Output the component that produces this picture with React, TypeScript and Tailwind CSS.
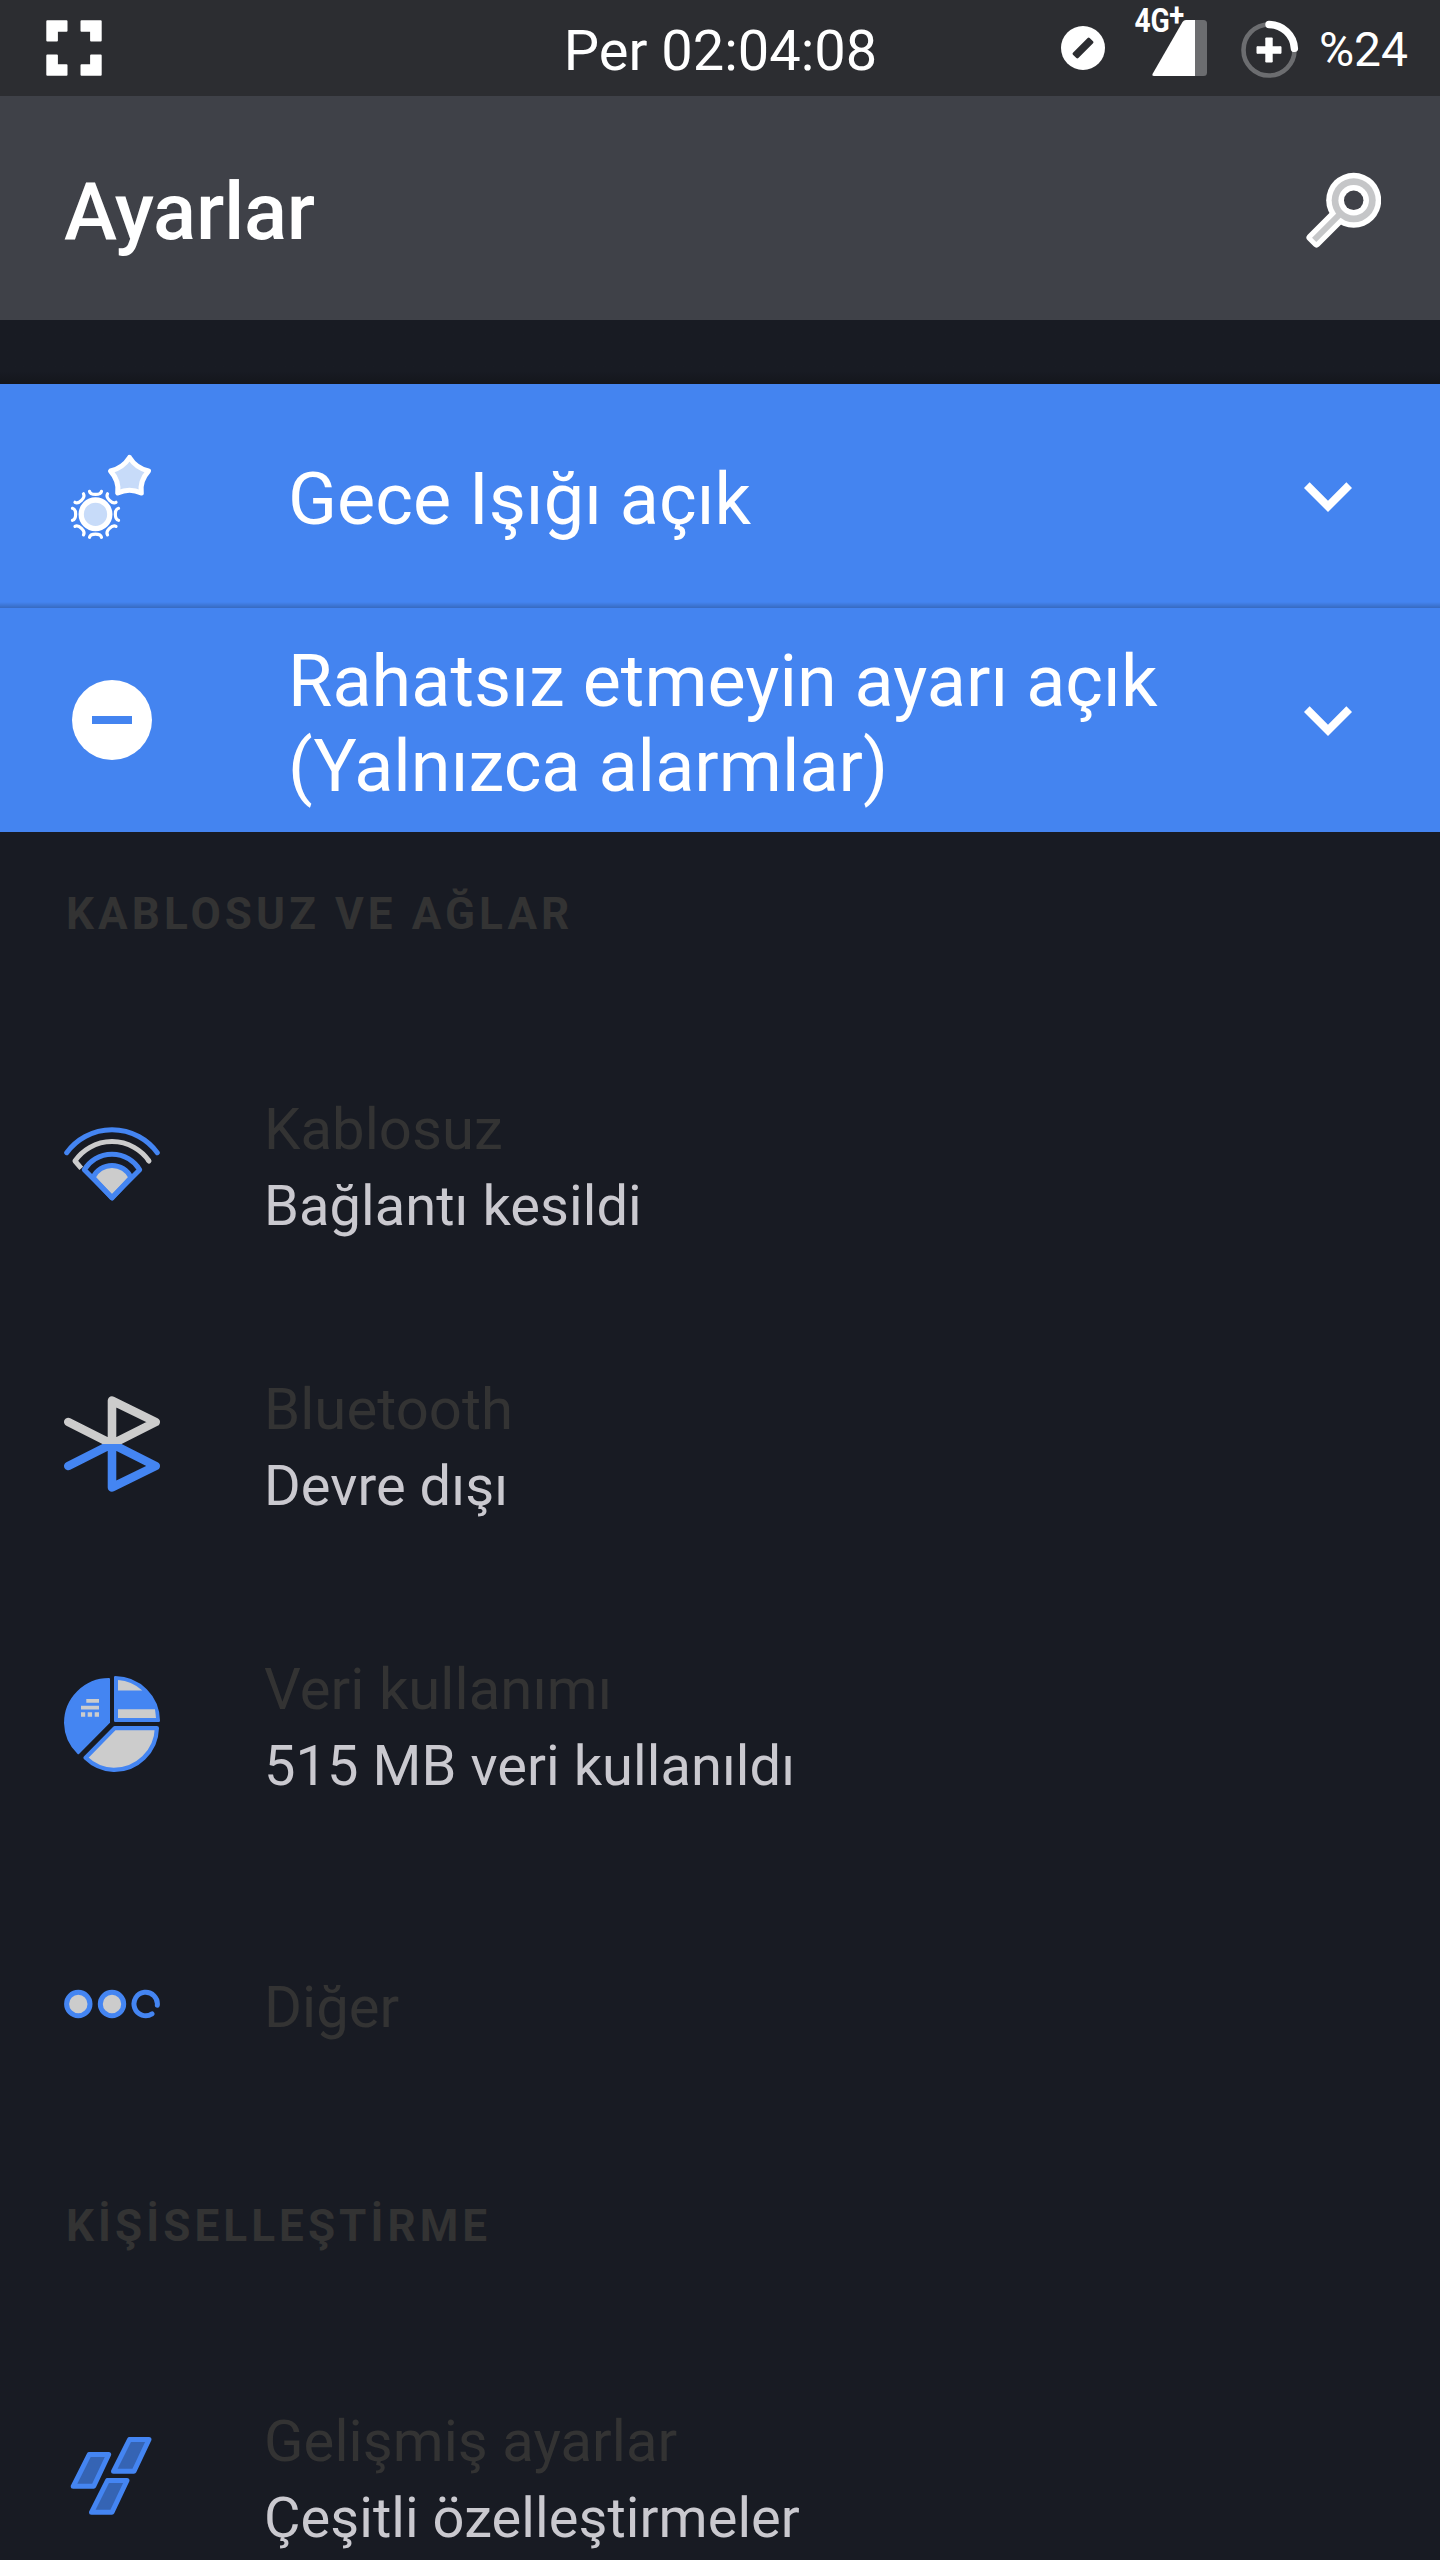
import type { ReactNode } from "react";

const ACCENT = "#4485f2";
const MUTED = "#cccccc";

function FullscreenIcon() {
  return (
    <svg width="56" height="56" viewBox="0 0 56 56" fill="white" stroke="white" strokeWidth="2" strokeLinejoin="round">
      <path d="M1.3 1.3H20.5V10.7H10.9V20.5H1.3Z" />
      <path d="M54.7 1.3H35.5V10.7H45.1V20.5H54.7Z" />
      <path d="M1.3 54.7H20.5V45.3H10.9V35.5H1.3Z" />
      <path d="M54.7 54.7H35.5V45.3H45.1V35.5H54.7Z" />
    </svg>
  );
}

function StatusDndIcon() {
  return (
    <svg width="44" height="44" viewBox="0 0 44 44">
      <circle cx="22" cy="22" r="22" fill="white" />
      <rect x="10.2" y="18.2" width="23.6" height="7.6" rx="1.4" fill="#2c2d31" transform="rotate(-45 22 22)" />
    </svg>
  );
}

function SignalIcon() {
  return (
    <svg width="74" height="96" viewBox="0 0 74 96" className="overflow-visible">
      <path d="M61 20H69.500Q73 20 73 23.500V72.500Q73 76 69.500 76H61Z" fill="#6c6d70" />
      <path d="M52 20H61V76H20Q17.500 76 18.800 73.500L48.500 22Q49.700 20 52 20Z" fill="white" />
      <text x="0.500" y="31.500" fill="white" fontFamily="Roboto" fontWeight="700" fontSize="34" transform="scale(0.83 1)">
        4G
        <tspan x="42.500" y="25.500" fontSize="33">
          +
        </tspan>
      </text>
    </svg>
  );
}

function BatteryIcon() {
  return (
    <svg width="60" height="60" viewBox="0 0 60 60" fill="none">
      <circle cx="30" cy="30" r="25.500" stroke="#6c6d70" strokeWidth="4.600" />
      <path d="M30 4.500A25.500 25.500 0 0 1 55.400 28.400" stroke="white" strokeWidth="7.400" strokeLinecap="round" />
      <path d="M18.500 30H41.500M30 18.500V41.500" stroke="white" strokeWidth="7.400" />
      <path d="M18.500 27.300V32.700M41.500 27.300V32.700M27.300 18.500H32.700M27.300 41.500H32.700" stroke="white" strokeWidth="2" strokeLinecap="round" />
    </svg>
  );
}

function SearchIcon() {
  return (
    <svg width="76" height="76" viewBox="0 0 76 76">
      <path d="M5.500 65.500L40 31L46 37L11.500 71.500Z" fill="white" stroke="white" strokeWidth="8" strokeLinejoin="round" />
      <circle cx="48.700" cy="28.300" r="27.500" fill="white" />
      <circle cx="48.700" cy="28.300" r="22" fill="#c5c6c8" />
      <path d="M48.700 28.300L9.200 67.800" stroke="#c5c6c8" strokeWidth="6" />
      <circle cx="48.700" cy="28.300" r="15.300" fill="white" />
      <circle cx="48.700" cy="28.300" r="9.700" fill="#3f4148" />
    </svg>
  );
}

function NightLightIcon() {
  const rays = [0, 45, 90, 135, 180, 225, 270, 315];

  return (
    <svg width="96" height="96" viewBox="0 0 96 96" fill="none" stroke="white" strokeLinecap="round" strokeLinejoin="round">
      <path
        d="M65.500 9.500Q72 20 84.500 23Q75.500 33 77.300 45Q65.500 39.500 53.700 45Q55.500 33 46.500 23Q59 20 65.500 9.500Z"
        fill="#c7dbf9"
        strokeWidth="5"
      />
      <circle cx="31.500" cy="66.300" r="14.300" fill="#c7dbf9" strokeWidth="5.300" />
      {rays.map((angle) => (
        <path key={angle} d="M-6 -23C-5 -18.800 5 -18.800 6 -23" strokeWidth="3.200" transform={`translate(31.5 66.3) rotate(${angle})`} />
      ))}
    </svg>
  );
}

function DndIcon() {
  return (
    <svg width="96" height="96" viewBox="0 0 96 96">
      <circle cx="48" cy="48" r="40" fill="white" />
      <rect x="28" y="44" width="40" height="8" fill="#4484f0" />
    </svg>
  );
}

function ChevronIcon() {
  return (
    <svg width="96" height="96" viewBox="0 0 24 24" fill="white">
      <path d="M16.590 8.590L12 13.170 7.410 8.590 6 10l6 6 6-6z" />
    </svg>
  );
}

function WifiIcon() {
  return (
    <svg width="96" height="96" viewBox="0 0 96 96" fill="none" stroke={ACCENT} strokeWidth="5" strokeLinecap="round" strokeLinejoin="round">
      <path d="M17.300 52.300L11 45A45 45 0 0 1 85 45" stroke={MUTED} strokeLinecap="butt" />
      <path d="M84.800 44.800L85 45" stroke={MUTED} />
      <path d="M2.700 36.700A56.100 56.100 0 0 1 93.300 36.700" />
      <path d="M29 61.500A21 21 0 0 1 67 61.500L48 82Z" fill={MUTED} />
      <path d="M48 81.500L20.300 53.700A32.500 32.500 0 0 1 75.700 53.700Z" />
    </svg>
  );
}

function BluetoothIcon() {
  return (
    <svg width="96" height="96" viewBox="0 0 96 96" fill="none" strokeWidth="8.600" strokeLinecap="round" strokeLinejoin="round">
      <clipPath id="bt-top">
        <rect width="96" height="48" />
      </clipPath>
      <clipPath id="bt-bottom">
        <rect y="48" width="96" height="48" />
      </clipPath>
      <path d="M4.300 26L48 48V4.600L91.700 26L48 48" stroke={MUTED} clipPath="url(#bt-top)" />
      <path d="M4.300 70L48 48V91.400L91.700 70L48 48" stroke={ACCENT} clipPath="url(#bt-bottom)" />
    </svg>
  );
}

function DataUsageIcon() {
  return (
    <svg width="96" height="96" viewBox="0 0 96 96" strokeLinejoin="round">
      <path d="M45 3V46.400L14.300 77.300A43.500 43.500 0 0 1 1 47A44 44 0 0 1 45 3Z" fill={ACCENT} stroke={ACCENT} strokeWidth="2" />
      <path d="M51.200 1.200V44.800H94.800A44 44 0 0 0 51.200 1.200Z" fill={ACCENT} stroke={ACCENT} strokeWidth="2.400" />
      <path d="M50.700 52.100H92.900A43 43 0 0 1 49.500 93.900A43 43 0 0 1 21.600 81.700Z" fill={MUTED} stroke={ACCENT} strokeWidth="4.200" />
      <path d="M54 4Q68 5 78.300 14.500H54Z" fill={MUTED} />
      <path d="M54 33.300H91L92 42H54Z" fill={MUTED} />
      <path d="M22.300 23H35V26.800H22.300ZM17 29.800H35V33.600H17ZM17 36.300H21.200V40.700H17ZM23.700 36.300H28.100V40.700H23.700ZM30.700 36.300H35V40.700H30.700Z" fill={MUTED} />
    </svg>
  );
}

function MoreIcon() {
  return (
    <svg width="96" height="96" viewBox="0 0 96 96" stroke={ACCENT} strokeWidth="5" strokeLinecap="round">
      <circle cx="14.300" cy="48" r="11.700" fill={MUTED} />
      <circle cx="48" cy="48" r="11.700" fill={MUTED} />
      <path d="M93.300 49.300A11.700 11.700 0 1 0 88 57.800" fill="none" />
    </svg>
  );
}

function AdvancedIcon() {
  return (
    <svg width="96" height="96" viewBox="0 0 96 96" fill="#3564b4" stroke={ACCENT} strokeWidth="5" strokeLinejoin="round">
      <path d="M65.500 11.500H85L70 43.300H49.500Z" />
      <path d="M25.200 26.500H44.700L29.700 58.300H9.200Z" />
      <path d="M43.500 52.500H63L48 84.300H27.500Z" />
    </svg>
  );
}

function Banner({ icon, children }: { icon: ReactNode; children: ReactNode }) {
  return (
    <div className="flex h-56 items-center bg-[#4484f0] pr-16 pl-16">
      {icon}
      <p className="ml-32 flex-1 pt-[7px] text-[72px] leading-[85px] tracking-[0.02px] text-white">{children}</p>
      <ChevronIcon />
    </div>
  );
}

function SectionHeader({ children }: { children: ReactNode }) {
  return (
    <h2 className="h-48 pt-[55px] pl-[66px] text-[44px] leading-[54px] font-bold tracking-[4.1px] text-[#333333]">{children}</h2>
  );
}

type Item = { title: string; summary?: string; icon: ReactNode };

function SettingRow({ title, summary, icon }: Item) {
  return (
    <li className="flex h-[280px] items-center pl-16">
      {icon}
      <div className={summary ? "ml-[104px] pt-2 tracking-[0.06px]" : "ml-[104px] pt-1.5"}>
        <p className="text-[58px] leading-[76px] text-[#333333]">{title}</p>
        {summary && <p className="text-[56px] leading-[78px] text-[#cac9cf]">{summary}</p>}
      </div>
    </li>
  );
}

const sections: { title: string; items: Item[] }[] = [
  {
    title: "KABLOSUZ VE AĞLAR",
    items: [
      { title: "Kablosuz", summary: "Bağlantı kesildi", icon: <WifiIcon /> },
      { title: "Bluetooth", summary: "Devre dışı", icon: <BluetoothIcon /> },
      { title: "Veri kullanımı", summary: "515 MB veri kullanıldı", icon: <DataUsageIcon /> },
      { title: "Diğer", icon: <MoreIcon /> },
    ],
  },
  {
    title: "KİŞİSELLEŞTİRME",
    items: [{ title: "Gelişmiş ayarlar", summary: "Çeşitli özelleştirmeler", icon: <AdvancedIcon /> }],
  },
];

export default function App() {
  return (
    <div className="h-[2560px] w-[1440px] overflow-hidden bg-[#181b23] font-['Roboto',sans-serif]">
      <header>
        <div className="grid h-24 grid-cols-[1fr_auto_1fr] items-center bg-[#2c2d31] text-white">
          <div className="pl-[46px]">
            <FullscreenIcon />
          </div>
          <span className="pt-1.5 pl-px text-[56px] leading-none">Per 02:04:08</span>
          <div className="flex items-center justify-end pr-8">
            <StatusDndIcon />
            <div className="ml-[29px]">
              <SignalIcon />
            </div>
            <div className="mt-[3px] ml-[31px]">
              <BatteryIcon />
            </div>
            <span className="ml-5 pt-1 text-[48px] leading-none">%24</span>
          </div>
        </div>
        <div className="flex h-56 items-center justify-between bg-[#3f4148] pr-[59px] pl-16">
          <h1 className="pt-2 text-[80px] leading-none font-medium tracking-[-0.3px] text-white">Ayarlar</h1>
          <div className="pt-1">
            <SearchIcon />
          </div>
        </div>
      </header>
      <div className="h-16 bg-linear-to-b from-[#181b23] from-80% to-[#14161c]" />
      <div className="relative">
        <Banner icon={<NightLightIcon />}>Gece Işığı açık</Banner>
        <div className="absolute top-[218px] h-1.5 w-full bg-linear-to-b from-transparent to-black/20" />
        <Banner icon={<DndIcon />}>
          Rahatsız etmeyin ayarı açık
          <br />
          (Yalnızca alarmlar)
        </Banner>
      </div>
      {sections.map((section) => (
        <section key={section.title}>
          <SectionHeader>{section.title}</SectionHeader>
          <ul>
            {section.items.map((item) => (
              <SettingRow key={item.title} {...item} />
            ))}
          </ul>
        </section>
      ))}
    </div>
  );
}
